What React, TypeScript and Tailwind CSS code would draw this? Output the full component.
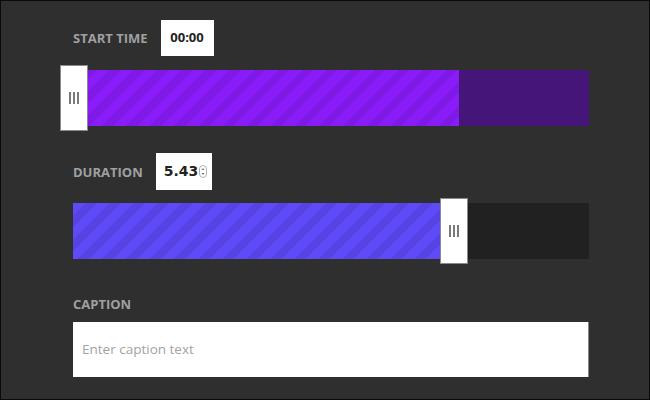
import React from "react";

function Grip() {
  return (
    <div className="flex gap-[2px]">
      <div className="w-[2px] h-[12px] bg-[#7a7a7a]" />
      <div className="w-[2px] h-[12px] bg-[#7a7a7a]" />
      <div className="w-[2px] h-[12px] bg-[#7a7a7a]" />
    </div>
  );
}

function Handle({ className }: { className: string }) {
  return (
    <div
      className={`absolute top-[-5px] w-[28px] h-[66px] bg-white border border-[#8a8a8a] flex items-center justify-center ${className}`}
    >
      <Grip />
    </div>
  );
}

export default function App() {
  const label = "text-[13px] font-bold text-[#a0a0a0] leading-[18px]";
  return (
    <div
      className="w-[650px] h-[400px] bg-[#2f2f2f] border border-[#0a0a0a] pl-[72px] pt-[19px]"
      style={{ fontFamily: '"Open Sans", "Liberation Sans", sans-serif' }}
    >
      <div className="flex items-center h-[36px]">
        <span className={label}>START TIME</span>
        <div className="ml-[13px] w-[53px] h-[36px] bg-white flex items-center justify-center text-[13px] font-bold text-[#222]">
          00:00
        </div>
      </div>

      <div className="relative mt-[14px] w-[516px] h-[56px] flex shadow-[inset_0_1px_0_rgba(0,0,0,0.25)]">
        <div className="w-[386px] h-full bg-[repeating-linear-gradient(135deg,#8a1cf9_0px,#8a1cf9_9px,#7f1ae6_9px,#7f1ae6_17px)]" />
        <div className="flex-1 h-full bg-[#46157a]" />
        <Handle className="left-[-13px]" />
      </div>

      <div className="flex items-center h-[37px] mt-[27px]">
        <span className={label}>DURATION</span>
        <div className="ml-[13px] w-[56px] h-[37px] bg-white flex items-center pl-[8px] gap-[1px]">
          <span
            className="text-[14px] font-bold text-[#222]"
            style={{ fontFamily: '"DejaVu Sans", sans-serif' }}
          >
            5.43
          </span>
          <svg width="8" height="13" viewBox="0 0 8 13">
            <rect x="0.5" y="0.5" width="7" height="12" rx="3.5" fill="none" stroke="#b0b0b0" strokeWidth="1" />
            <path d="M2.5 5 L4 3 L5.5 5 Z" fill="#777" />
            <path d="M2.5 8 L4 10 L5.5 8 Z" fill="#777" />
          </svg>
        </div>
      </div>

      <div className="relative mt-[13px] w-[516px] h-[56px] flex">
        <div className="w-[367px] h-full bg-[repeating-linear-gradient(135deg,#5f4af7_0px,#5f4af7_9px,#5742e4_9px,#5742e4_17px)]" />
        <div className="flex-1 h-full bg-[#212121]" />
        <Handle className="left-[367px]" />
      </div>

      <div className="mt-[32px]">
        <span className={label}>CAPTION</span>
      </div>
      <div className="mt-[7px] w-[516px] h-[55px] bg-white border-r border-[#888] flex items-center pl-[9px]">
        <span className="text-[13.5px] text-[#a3a3a3]">Enter caption text</span>
      </div>
    </div>
  );
}
